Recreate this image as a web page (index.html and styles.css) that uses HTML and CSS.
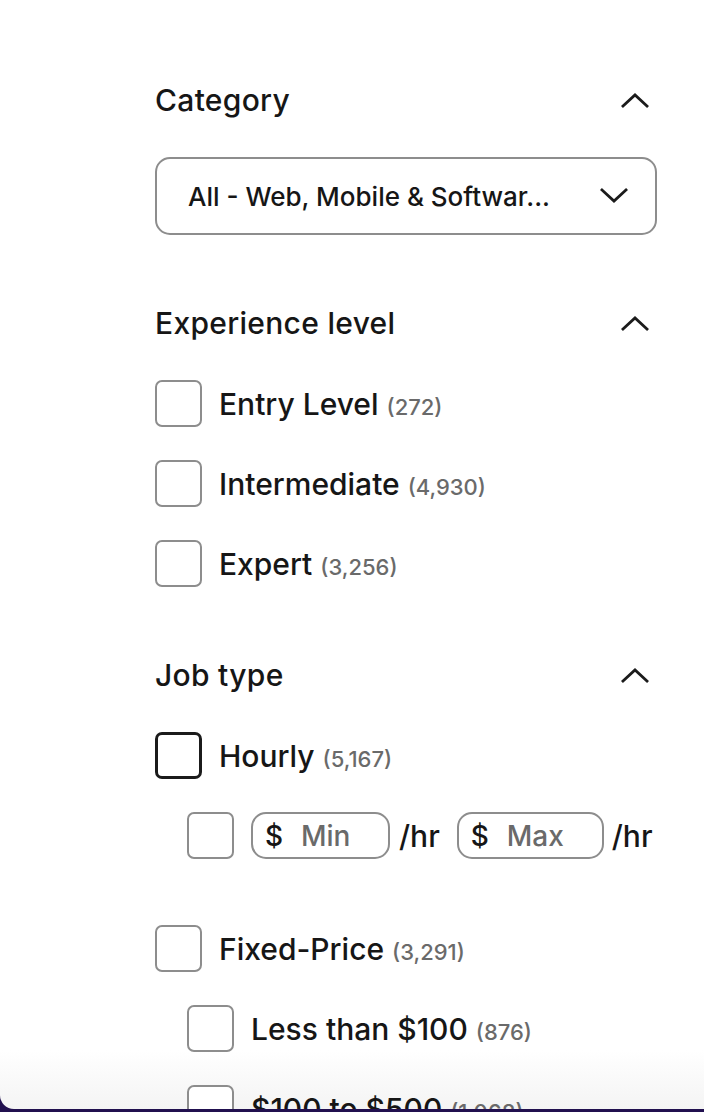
FILE: index.html
```html
<!DOCTYPE html>
<html lang="en">
<head>
<meta charset="utf-8">
<title>Filters</title>
<link rel="stylesheet" href="styles.css">
</head>
<body>
<div class="panel">
  <section class="group">
    <div class="group-head">
      <h2 class="group-title">Category</h2>
      <svg class="chev" viewBox="0 0 28 16" width="28" height="16"><path d="M2 14 L14 3 L26 14" fill="none" stroke="#1b1b1b" stroke-width="2.8" stroke-linecap="square"/></svg>
    </div>
    <div class="select">
      <span class="select-text">All - Web, Mobile &amp; Softwar...</span>
      <svg class="chev" viewBox="0 0 28 16" width="28" height="16"><path d="M2 2 L14 13 L26 2" fill="none" stroke="#1b1b1b" stroke-width="2.8" stroke-linecap="square"/></svg>
    </div>
  </section>

  <section class="group">
    <div class="group-head">
      <h2 class="group-title">Experience level</h2>
      <svg class="chev" viewBox="0 0 28 16" width="28" height="16"><path d="M2 14 L14 3 L26 14" fill="none" stroke="#1b1b1b" stroke-width="2.8" stroke-linecap="square"/></svg>
    </div>
    <ul class="opts">
      <li class="opt"><span class="box"></span><span class="label">Entry Level <span class="count">(272)</span></span></li>
      <li class="opt"><span class="box"></span><span class="label">Intermediate <span class="count">(4,930)</span></span></li>
      <li class="opt"><span class="box"></span><span class="label">Expert <span class="count">(3,256)</span></span></li>
    </ul>
  </section>

  <section class="group">
    <div class="group-head">
      <h2 class="group-title">Job type</h2>
      <svg class="chev" viewBox="0 0 28 16" width="28" height="16"><path d="M2 14 L14 3 L26 14" fill="none" stroke="#1b1b1b" stroke-width="2.8" stroke-linecap="square"/></svg>
    </div>
    <ul class="opts">
      <li class="opt"><span class="box box-focus"></span><span class="label">Hourly <span class="count">(5,167)</span></span></li>
      <li class="opt sub rate">
        <span class="box"></span>
        <span class="rate-input rate-min"><span class="cur">$</span><span class="ph">Min</span></span>
        <span class="unit">/hr</span>
        <span class="rate-input rate-max"><span class="cur">$</span><span class="ph">Max</span></span>
        <span class="unit">/hr</span>
      </li>
      <li class="opt fixed"><span class="box"></span><span class="label">Fixed-Price <span class="count">(3,291)</span></span></li>
      <li class="opt sub"><span class="box"></span><span class="label">Less than $100 <span class="count">(876)</span></span></li>
      <li class="opt sub"><span class="box"></span><span class="label">$100 to $500 <span class="count">(1,068)</span></span></li>
    </ul>
  </section>
</div>
</body>
</html>
```

FILE: styles.css
```css
* { box-sizing: border-box; }
html, body { margin: 0; padding: 0; }
body {
  background: #21104f;
  font-family: Inter, "Noto Sans", sans-serif;
  color: #161616;
}
.panel {
  background: linear-gradient(to bottom, #ffffff 0, #ffffff 1050px, #f4f4f4 1109px);
  height: 1109px;
  overflow: hidden;
  border-bottom-left-radius: 14px;
  padding: 78px 47px 0 155px;
}
.group { margin-bottom: 66px; }
.group-head {
  height: 44px;
  display: flex;
  align-items: center;
  justify-content: space-between;
  padding-right: 8px;
}
.group-title {
  margin: 0;
  font-size: 30px;
  font-weight: 500;
  letter-spacing: 0.3px;
}
.select {
  margin-top: 35px;
  height: 78px;
  border: 2px solid #8d8d8d;
  border-radius: 15px;
  display: flex;
  align-items: center;
  justify-content: space-between;
  padding: 0 27px 0 31px;
}
.select-text { font-size: 26px; font-weight: 500; letter-spacing: 0; }
.opts {
  list-style: none;
  margin: 35px 0 0 0;
  padding: 0;
  display: flex;
  flex-direction: column;
  gap: 33px;
}
.opt {
  display: flex;
  align-items: center;
  height: 47px;
}
.opt.sub { padding-left: 32px; }
.opt.fixed { margin-top: 33px; }
.box {
  flex: none;
  width: 47px;
  height: 47px;
  border: 2px solid #8d8d8d;
  border-radius: 7px;
  background: #fff;
}
.box-focus { border: 3px solid #1b1b1b; }
.label {
  margin-left: 17px;
  font-size: 30px;
  font-weight: 500;
  letter-spacing: 0;
  white-space: nowrap;
}
.count { font-size: 22px; font-weight: 500; color: #6a6a6a; letter-spacing: 0; }
.rate .box { margin-right: 17px; }
.rate-input {
  display: flex;
  align-items: center;
  height: 47px;
  border: 2px solid #8d8d8d;
  border-radius: 15px;
  padding-left: 12px;
}
.rate-min { width: 139px; }
.rate-max { width: 147px; }
.cur { font-size: 28px; font-weight: 500; width: 36px; }
.ph { font-size: 28px; font-weight: 500; color: #6a6a6a; }
.unit { font-size: 30px; font-weight: 500; margin: 0 17px 0 9px; }
.unit:last-child { margin-right: 0; margin-left: 8px; }
```
